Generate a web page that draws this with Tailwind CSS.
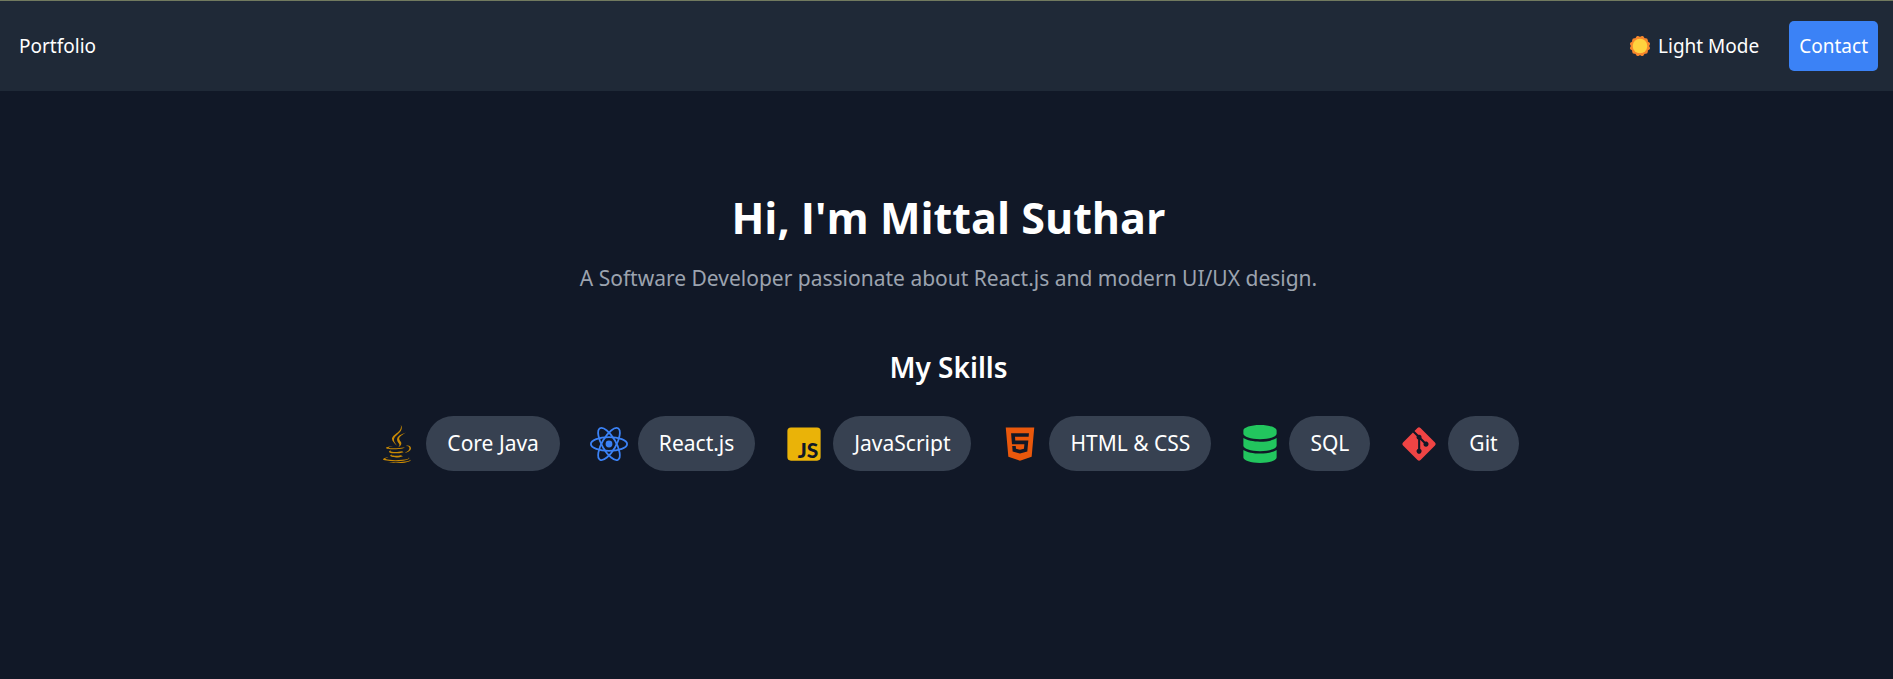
<!DOCTYPE html>
<html lang="en">
<head>
<meta charset="utf-8">
<meta name="viewport" content="width=device-width, initial-scale=1">
<title>Portfolio</title>
<script src="https://cdn.jsdelivr.net/npm/@tailwindcss/browser@4"></script>
</head>
<body class="flex min-h-screen flex-col bg-[#111827] font-['Segoe_UI','Noto_Sans','Open_Sans',sans-serif] text-white">
<header class="border-t border-[#717a5f] bg-[#1f2937]">
  <nav class="flex items-center justify-between py-5 pr-[15px] pl-[19px] text-[19px] leading-[30px]">
    <a href="#">Portfolio</a>
    <div class="flex items-center gap-[30px]">
      <button type="button" class="flex items-center gap-2">
        <svg class="size-5" viewBox="0 0 20 20" aria-hidden="true">
          <g fill="#f8872c">
            <rect x="2.2" y="2.2" width="15.6" height="15.6" rx="2"/>
            <rect x="2.2" y="2.2" width="15.6" height="15.6" rx="2" transform="rotate(30 10 10)"/>
            <rect x="2.2" y="2.2" width="15.6" height="15.6" rx="2" transform="rotate(60 10 10)"/>
          </g>
          <circle cx="10" cy="10" r="7.3" fill="#ffd23e"/>
        </svg>
        Light Mode
      </button>
      <a href="#contact" class="rounded-[5px] bg-[#3b82f6] p-[10px]">Contact</a>
    </div>
  </nav>
</header>
<main class="flex flex-col items-center pt-[102px] pl-1 text-center">
  <h1 class="font-['Segoe_UI','Open_Sans',sans-serif] text-[43px] leading-[50px] font-bold">Hi, I'm Mittal Suthar</h1>
  <p class="mt-[18px] text-[21px] leading-[35px] text-[#9ca3af]">A Software Developer passionate about React.js and modern UI/UX design.</p>
  <h2 class="mt-[51px] text-[28px] leading-[40px] font-semibold">My Skills</h2>
  <ul class="mt-[29px] flex flex-wrap justify-center gap-[30px] text-[21px] leading-[35px]">
    <li class="flex items-center gap-[10px]">
      <svg class="size-[38px] text-[#ca8a04]" fill="currentColor" viewBox="0 0 384 512" aria-hidden="true"><path d="M277.74 312.9c9.8-6.7 23.4-12.5 23.4-12.5s-38.7 7-77.2 10.2c-47.1 3.9-97.7 4.7-123.1 1.3-60.1-8 33-30.1 33-30.1s-36.1-2.4-80.6 19c-52.5 25.4 130 37 224.5 12.1zm-85.4-32.1c-19-42.7-83.1-80.2 0-145.8C296 53.2 242.84 0 242.84 0c21.5 84.5-75.6 110.1-110.7 162.6-23.9 35.9 11.7 74.4 60.2 118.2zm114.6-176.2c.1 0-175.2 43.8-91.5 140.2 24.7 28.4-6.5 54-6.5 54s62.7-32.4 33.9-72.9c-26.9-37.8-47.5-56.6 64.1-121.3zm-6.1 270.5a12.19 12.19 0 0 1-2 2.6c128.3-33.7 81.1-118.9 19.8-97.3a17.33 17.33 0 0 0-8.2 6.3 70.45 70.45 0 0 1 11-3c31-6.5 75.5 41.5-20.6 91.4zM348 437.4s14.5 11.9-15.9 21.2c-57.9 17.5-240.8 22.8-291.6.7-18.3-7.9 16-19 26.8-21.3 11.2-2.4 17.7-2 17.7-2-20.3-14.3-131.3 28.1-56.4 40.2C232.84 509.4 401 461.3 348 437.4zM124.44 396c-78.7 22 47.9 67.4 148.1 24.5a185.89 185.89 0 0 1-28.2-13.8c-44.7 8.5-65.4 9.1-106 4.5-33.5-3.8-13.9-15.2-13.9-15.2zm179.8 97.2c-78.7 14.8-175.8 13.1-233.3 3.6 0-.1 11.8 9.7 72.4 13.6 92.2 5.9 233.8-3.3 237.1-46.9 0 0-6.4 16.5-76.2 29.7zM260.64 353c-59.2 11.4-93.5 11.1-136.8 6.6-33.5-3.5-11.6-19.7-11.6-19.7-86.8 28.8 48.2 61.4 169.5 25.9a60.37 60.37 0 0 1-21.1-12.8z"/></svg>
      <span class="rounded-full bg-[#374151] px-[21px] py-[10px]">Core Java</span>
    </li>
    <li class="flex items-center gap-[10px]">
      <svg class="size-[38px] text-[#3b82f6]" fill="none" stroke="currentColor" stroke-width="24" viewBox="0 0 512 512" aria-hidden="true">
        <ellipse cx="256" cy="256" rx="244" ry="93"/>
        <ellipse cx="256" cy="256" rx="244" ry="93" transform="rotate(60 256 256)"/>
        <ellipse cx="256" cy="256" rx="244" ry="93" transform="rotate(120 256 256)"/>
        <circle cx="256" cy="256" r="46" fill="currentColor" stroke="none"/>
      </svg>
      <span class="rounded-full bg-[#374151] px-[21px] py-[10px]">React.js</span>
    </li>
    <li class="flex items-center gap-[10px]">
      <svg class="size-[38px]" viewBox="0 0 512 512" aria-hidden="true">
        <rect x="32" y="32" width="448" height="448" rx="48" fill="#eab308"/>
        <text x="448" y="443" text-anchor="end" font-family="Lato, sans-serif" font-weight="900" font-size="282" fill="#111827">JS</text>
      </svg>
      <span class="rounded-full bg-[#374151] px-[21px] py-[10px]">JavaScript</span>
    </li>
    <li class="flex items-center gap-[10px]">
      <svg class="size-[38px] text-[#ea580c]" fill="currentColor" viewBox="0 0 384 512" aria-hidden="true"><path d="M0 32l34.9 395.8L191.5 480l157.6-52.2L384 32H0zm308.2 127.9H124.4l4.1 49.4h175.6l-13.6 148.4-97.9 27v.3h-1.1l-98.7-27.3-6-75.8h47.7L138 320l53.5 14.5 53.7-14.5 6-62.2H84.3L71.5 112.2h241.1l-4.4 47.7z"/></svg>
      <span class="rounded-full bg-[#374151] px-[21px] py-[10px]">HTML &amp; CSS</span>
    </li>
    <li class="flex items-center gap-[10px]">
      <svg class="size-[38px] text-[#22c55e]" fill="currentColor" viewBox="0 0 448 512" aria-hidden="true"><path d="M448 73.143v45.714C448 159.143 347.667 192 224 192S0 159.143 0 118.857V73.143C0 32.857 100.333 0 224 0s224 32.857 224 73.143zM448 176v102.857C448 319.143 347.667 352 224 352S0 319.143 0 278.857V176c48.125 33.143 136.208 48.572 224 48.572S399.874 209.143 448 176zm0 160v102.857C448 479.143 347.667 512 224 512S0 479.143 0 438.857V336c48.125 33.143 136.208 48.572 224 48.572S399.874 369.143 448 336z"/></svg>
      <span class="rounded-full bg-[#374151] px-[21px] py-[10px]">SQL</span>
    </li>
    <li class="flex items-center gap-[10px]">
      <svg class="size-[38px] text-[#ef4444]" fill="currentColor" viewBox="0 0 448 512" aria-hidden="true"><path d="M439.55 236.05L244 40.45a28.87 28.87 0 0 0-40.81 0l-40.66 40.63 51.52 51.52c27.06-9.14 52.68 16.77 43.39 43.68l49.66 49.66c34.23-11.8 61.18 31 35.47 56.69-26.49 26.49-70.21-2.87-56-37.34L240.22 199v121.85c25.3 12.54 22.26 41.85 9.08 55a34.34 34.34 0 0 1-48.55 0c-17.57-17.6-11.07-46.91 11.25-56v-123c-20.8-8.51-24.6-30.74-18.64-45L142.57 101 8.45 235.14a28.86 28.86 0 0 0 0 40.81l195.61 195.6a28.86 28.86 0 0 0 40.8 0l194.69-194.69a28.86 28.86 0 0 0 0-40.81z"/></svg>
      <span class="rounded-full bg-[#374151] px-[21px] py-[10px]">Git</span>
    </li>
  </ul>
</main>
</body>
</html>
